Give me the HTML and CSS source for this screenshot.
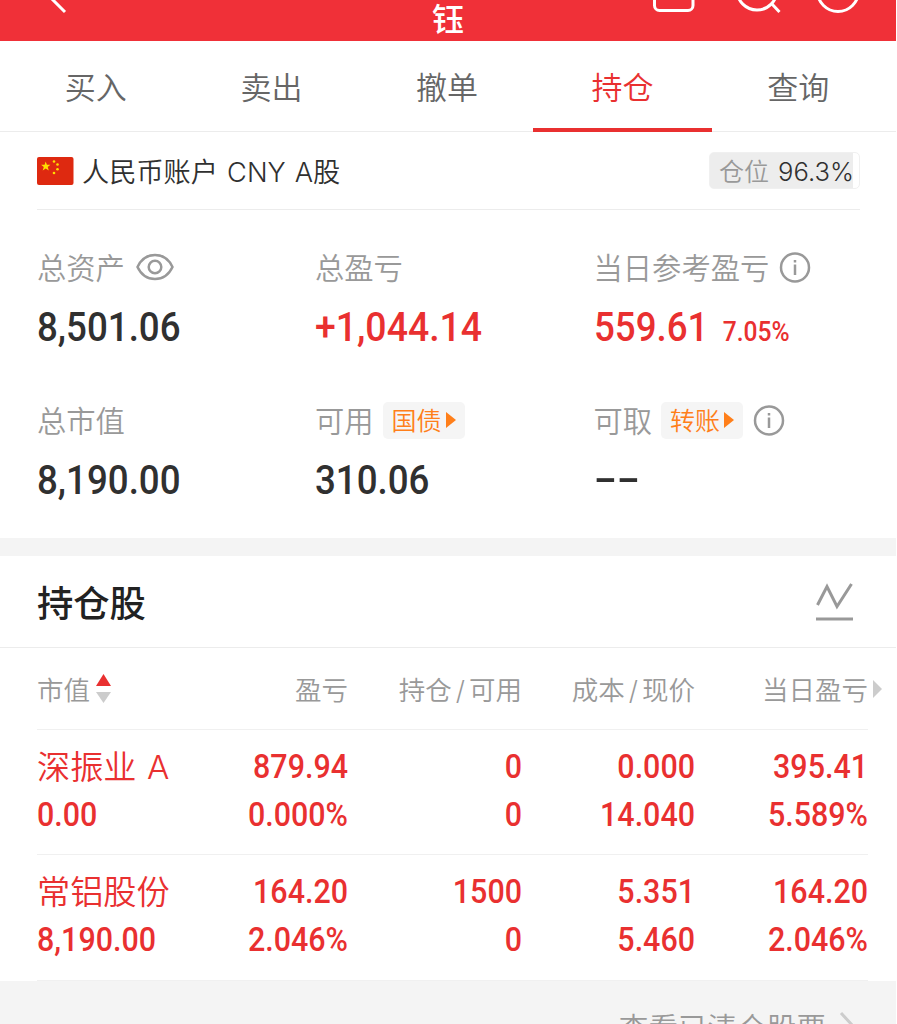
FILE: index.html
```html
<!DOCTYPE html>
<html lang="zh-CN">
<head>
    <meta charset="UTF-8">
    <meta name="viewport" content="width=device-width, initial-scale=1.0">
    <title>持仓</title>
    <link rel="stylesheet" href="styles.css">
</head>
<body>
    <div class="app">
        <header class="header">
            <svg class="back" width="40" height="41" viewBox="0 0 40 41"><path d="M26 -13 L13 -2 L27 12" /></svg>
            <h1 class="header-title">钰</h1>
            <svg class="header-icons" width="240" height="41" viewBox="0 0 240 41">
                <rect x="17.5" y="-28" width="38.5" height="38.5" rx="5" />
                <circle cx="120" cy="-10" r="20" />
                <path d="M134 3 L142.5 12" />
                <circle cx="201" cy="-9" r="20.5" />
            </svg>
        </header>
        <nav class="tabs">
            <a class="tab">买入</a>
            <a class="tab">卖出</a>
            <a class="tab">撤单</a>
            <a class="tab active">持仓</a>
            <a class="tab">查询</a>
        </nav>

        <section class="account">
            <div class="account-row">
                <svg class="flag" width="37" height="28" viewBox="0 0 37 28">
                    <rect width="36.5" height="28" rx="2" fill="#de2910" />
                    <g fill="#ffde00">
                        <path d="M8.7 4.5 L9.9 7.7 H13.4 L10.7 9.9 L11.8 13.4 L8.7 11.4 L5.7 13.4 L6.8 9.9 L4.1 7.7 H7.6 Z" />
                        <circle cx="17" cy="4.5" r="1.3" />
                        <circle cx="20.5" cy="7.5" r="1.3" />
                        <circle cx="20.5" cy="12.2" r="1.3" />
                        <circle cx="17" cy="16" r="1.3" />
                    </g>
                </svg>
                <span class="account-name">人民币账户 CNY A股</span>
                <div class="position"><span>仓位</span><b>96.3%</b></div>
            </div>
            <div class="stats">
                <div class="stat">
                    <div class="label">总资产
                        <svg class="eye" width="38" height="28" viewBox="0 0 38 28">
                            <path d="M1.5 14 C9 -2 29 -2 36.5 14 C29 30 9 30 1.5 14 Z" />
                            <circle cx="19" cy="14" r="6.3" />
                        </svg>
                    </div>
                    <div class="value">8,501.06</div>
                </div>
                <div class="stat">
                    <div class="label">总盈亏</div>
                    <div class="value red plus">+1,044.14</div>
                </div>
                <div class="stat">
                    <div class="label">当日参考盈亏
                        <svg class="info" width="32" height="32" viewBox="0 0 32 32"><circle cx="16" cy="16.5" r="14" /><path d="M16 13.5 V24" /><path d="M16 9 V11.5" /></svg>
                    </div>
                    <div class="value red">559.61<small>7.05%</small></div>
                </div>
                <div class="stat">
                    <div class="label">总市值</div>
                    <div class="value">8,190.00</div>
                </div>
                <div class="stat">
                    <div class="label">可用<a class="tag">国债<i class="arrow"></i></a></div>
                    <div class="value">310.06</div>
                </div>
                <div class="stat">
                    <div class="label">可取<a class="tag">转账<i class="arrow"></i></a>
                        <svg class="info" width="32" height="32" viewBox="0 0 32 32"><circle cx="16" cy="16.5" r="14" /><path d="M16 13.5 V24" /><path d="M16 9 V11.5" /></svg>
                    </div>
                    <div class="value dashes">--</div>
                </div>
            </div>
        </section>

        <section class="holdings">
            <div class="holdings-title">
                <h2>持仓股</h2>
                <svg class="chart" width="40" height="40" viewBox="0 0 40 40">
                    <path d="M3.5 23 L13 4.5 L23 24.5 L37.5 2" />
                    <path d="M2 37 H39" />
                </svg>
            </div>
            <div class="table">
                <div class="row head">
                    <div class="sort">市值
                        <svg width="15" height="30" viewBox="0 0 15 30"><path d="M7.5 0 L15 12 H0 Z" fill="#e93030" /><path d="M0 18 H15 L7.5 29 Z" fill="#ccc" /></svg>
                    </div>
                    <div>盈亏</div>
                    <div>持仓<em>/</em>可用</div>
                    <div>成本<em>/</em>现价</div>
                    <div class="more">当日盈亏</div>
                </div>
                <div class="row">
                    <div><span class="name">深振业 A</span><span>0.00</span></div>
                    <div><span>879.94</span><span>0.000%</span></div>
                    <div><span>0</span><span>0</span></div>
                    <div><span>0.000</span><span>14.040</span></div>
                    <div><span>395.41</span><span>5.589%</span></div>
                </div>
                <div class="row last">
                    <div><span class="name">常铝股份</span><span>8,190.00</span></div>
                    <div><span>164.20</span><span>2.046%</span></div>
                    <div><span>1500</span><span>0</span></div>
                    <div><span>5.351</span><span>5.460</span></div>
                    <div><span>164.20</span><span>2.046%</span></div>
                </div>
            </div>
        </section>

        <footer class="footer">
            <span>查看已清仓股票</span>
            <svg width="16" height="30" viewBox="0 0 16 30"><path d="M2 2 L14 15 L2 28" /></svg>
        </footer>
    </div>
</body>
</html>
```

FILE: styles.css
```css
* {
    box-sizing: border-box;
}
body {
    margin: 0;
    background: #fff;
    color: #303030;
    font-family: Inter, "Noto Sans CJK SC", sans-serif;
    font-weight: 350;
}
.app {
    width: 896px;
    height: 1024px;
    overflow: hidden;
}
svg {
    flex: none;
    fill: none;
    stroke-width: 3;
}
.header {
    display: flex;
    height: 41px;
    padding: 0 19px 0 38px;
    background: #f03038;
}
.header svg {
    stroke: #fff;
}
.header .back {
    margin-right: 181px;
}
.header-title {
    flex: 1;
    margin: 0;
    color: #fff;
    font-size: 32px;
    font-weight: 500;
    line-height: 40px;
    text-align: center;
}
.tabs {
    display: flex;
    height: 91px;
    padding: 0 10px 0 8px;
    border-bottom: 1px solid #ececec;
}
.tab {
    position: relative;
    flex: 1;
    color: #666;
    font-size: 31px;
    line-height: 93px;
    text-align: center;
}
.tab.active {
    color: #e93030;
}
.tab.active::after {
    content: "";
    position: absolute;
    left: -2px;
    right: -2px;
    bottom: -1px;
    height: 4px;
    background: #e93030;
}
.account {
    height: 406px;
    padding: 0 36px 0 37px;
}
.account-row {
    display: flex;
    align-items: center;
    height: 78px;
    border-bottom: 1px solid #ececec;
}
.account-name {
    margin: 0 0 2px 8px;
    font-size: 27.2px;
    word-spacing: 1.5px;
}
.position {
    display: flex;
    align-items: center;
    gap: 9px;
    width: 151px;
    height: 37px;
    margin-left: auto;
    padding: 2px 0 0 9px;
    border: 1px solid #f0f0f0;
    border-radius: 5px;
    background: linear-gradient(90deg, #ededed 96.3%, #fff 96.3%);
    color: #999;
    font-size: 25px;
    line-height: 34px;
    white-space: nowrap;
}
.position b {
    color: #303030;
    font-size: 25.6px;
    font-weight: 350;
}
.stats {
    display: grid;
    grid-template-columns: 278px 278.5px 1fr;
    grid-auto-rows: 153px;
    padding-top: 38px;
}
.label {
    display: flex;
    align-items: center;
    height: 38px;
    padding-top: 4px;
    color: #999;
    font-size: 29.3px;
    line-height: 34px;
    white-space: nowrap;
}
.label svg {
    margin-top: -4px;
    stroke: #999;
    stroke-width: 2.5;
}
.eye {
    margin-left: 11px;
}
.info {
    margin-left: 10px;
}
/* узкие цифры */
.value {
    margin-top: 17px;
    font-family: Roboto, sans-serif;
    font-size: 41px;
    font-weight: 500;
    line-height: 48px;
    transform: scaleX(0.895);
    transform-origin: left;
}
.value small {
    margin-left: 16px;
    font-size: 27.5px;
}
.plus {
    transform: scaleX(0.912);
}
.dashes {
    line-height: 46px;
    transform: scaleX(1.65);
}
.red {
    color: #e93030;
}
.tag {
    display: flex;
    align-items: center;
    height: 37px;
    margin: -4px 0 0 9px;
    padding: 2px 9px 0;
    border-radius: 5px;
    background: #f5f5f5;
    color: #ff7f1a;
    font-size: 25px;
}
.arrow {
    margin: -2px 0 0 4px;
    border-left: 10px solid #ff7f1a;
    border-top: 8px solid transparent;
    border-bottom: 8px solid transparent;
}
.holdings {
    border-top: 18px solid #f4f4f4;
}
.holdings-title {
    display: flex;
    align-items: center;
    justify-content: space-between;
    height: 92px;
    padding: 0 42px 0 37px;
    border-bottom: 1px solid #ececec;
}
.holdings-title h2 {
    margin: 0 0 2px;
    color: #222;
    font-size: 36.3px;
    font-weight: 500;
}
.chart {
    stroke: #999;
}
.table {
    padding: 0 28px 0 37px;
}
.row {
    display: grid;
    grid-template-columns: 138px 173px 174px 173px 173px;
    align-items: center;
    height: 125px;
    padding-bottom: 4px;
    border-bottom: 1px solid #f0f0f0;
    color: #e93030;
    font-family: Roboto, "Noto Sans CJK SC", sans-serif;
    font-size: 34px;
    font-weight: 500;
    text-align: right;
    white-space: nowrap;
}
.row.last {
    height: 126px;
    padding-bottom: 6px;
}
.row span {
    display: block;
    line-height: 48px;
    transform: scaleX(0.895);
    transform-origin: right;
}
.row > :first-child {
    text-align: left;
}
.row > :first-child span {
    transform-origin: left;
}
.row > :first-child .name {
    height: 48px;
    font-family: Inter, "Noto Sans CJK SC", sans-serif;
    font-size: 33.2px;
    font-weight: 350;
    line-height: 51px;
    word-spacing: 1px;
    transform: none;
}
.row.head {
    height: 82px;
    padding-bottom: 0;
    color: #999;
    font-family: Inter, "Noto Sans CJK SC", sans-serif;
    font-size: 26.5px;
    font-weight: 350;
}
.head em {
    margin: 0 4px;
    font-style: normal;
}
.sort {
    display: flex;
    align-items: center;
    gap: 6px;
}
.more {
    position: relative;
}
.more::after {
    content: "";
    position: absolute;
    right: -14px;
    top: 50%;
    margin-top: -9px;
    border-left: 9px solid #ccc;
    border-top: 9px solid transparent;
    border-bottom: 9px solid transparent;
}
.footer {
    display: flex;
    align-items: center;
    justify-content: flex-end;
    gap: 13px;
    height: 90px;
    padding-right: 41px;
    background: #f4f4f4;
    color: #999;
    font-size: 29.6px;
}
.footer svg {
    stroke: #ccc;
}
```
